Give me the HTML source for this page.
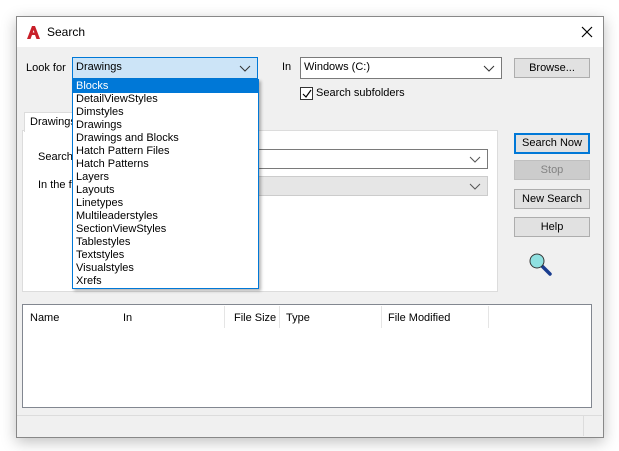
<!DOCTYPE html><html><head><style>
body{margin:0;width:619px;height:451px;background:#fff;font-family:"Liberation Sans",sans-serif;font-size:11px;color:#000;position:relative;overflow:hidden}
.a{position:absolute}
.win{left:16px;top:16px;width:586px;height:420px;border:1px solid #888;background:#f0f0f0;box-shadow:0 4px 14px rgba(0,0,0,.25)}
.title{left:0;top:0;width:586px;height:30px;background:#fff}
.btn{background:#e1e1e1;border:1px solid #adadad;text-align:center;line-height:18px;box-sizing:border-box}
.combo{background:#fff;border:1px solid #7a7a7a;box-sizing:border-box;padding-left:3px;line-height:19px}
.chev{position:absolute;right:6px;top:3px;width:12px;height:12px}
.list div{height:13px;line-height:13px;padding-left:3px;white-space:nowrap}
</style></head><body>
<div class="a win">
 <div class="a title">
  <svg class="a" style="left:9px;top:8px" width="15" height="15" viewBox="0 0 15 15"><path d="M1 14L6 1h3l5 13h-3.5L9 10H6l-1.5 4z M6.8 7.5h1.6L7.6 5z" fill="#c8202a" fill-rule="evenodd"/></svg>
  <div class="a" style="left:30px;top:8px;font-size:12px">Search</div>
  <svg class="a" style="left:564px;top:9px" width="12" height="12"><path d="M1 1L11 11M11 1L1 11" stroke="#000" stroke-width="1.2"/></svg>
 </div>
</div>
<div class="a" style="left:26px;top:62px">Look for</div>
<div class="a combo" style="left:72px;top:57px;width:186px;height:22px;background:#cce4f7;border-color:#0078d7">Drawings<svg class="chev" style="top:4px"><path d="M1 4l5 5 5-5" fill="none" stroke="#333"/></svg></div>
<div class="a" style="left:282px;top:61px">In</div>
<div class="a combo" style="left:300px;top:57px;width:202px;height:22px">Windows (C:)<svg class="chev" style="top:4px"><path d="M1 4l5 5 5-5" fill="none" stroke="#333"/></svg></div>
<div class="a btn" style="left:514px;top:58px;width:76px;height:20px">Browse...</div>
<div class="a" style="left:300px;top:87px;width:13px;height:13px;border:1px solid #333;box-sizing:border-box;background:#fff"><svg class="a" style="left:1px;top:1px" width="10" height="10"><path d="M1 5l3 3 5-7" fill="none" stroke="#000" stroke-width="1.2"/></svg></div>
<div class="a" style="left:316px;top:87px">Search subfolders</div>
<div class="a" style="left:22px;top:130px;width:476px;height:162px;background:#fff;border:1px solid #dcdcdc;box-sizing:border-box"></div>
<div class="a" style="left:24px;top:112px;width:52px;height:19px;background:#fff;border:1px solid #dcdcdc;border-bottom:none;padding-left:5px;line-height:18px">Drawings</div>
<div class="a" style="left:38px;top:151px">Search</div>
<div class="a combo" style="left:240px;top:149px;width:248px;height:20px"><svg class="chev"><path d="M1 4l5 5 5-5" fill="none" stroke="#555"/></svg></div>
<div class="a" style="left:38px;top:179px">In the fi</div>
<div class="a combo" style="left:240px;top:176px;width:248px;height:20px;background:#e6e6e6;border-color:#ccc"><svg class="chev"><path d="M1 4l5 5 5-5" fill="none" stroke="#555"/></svg></div>
<div class="a btn" style="left:514px;top:133px;width:76px;height:21px;border:2px solid #0078d7;line-height:17px">Search Now</div>
<div class="a btn" style="left:514px;top:160px;width:76px;height:20px;background:#ccc;border-color:#bfbfbf;color:#838383">Stop</div>
<div class="a btn" style="left:514px;top:189px;width:76px;height:20px">New Search</div>
<div class="a btn" style="left:514px;top:217px;width:76px;height:20px">Help</div>
<svg class="a" style="left:528px;top:252px" width="28" height="26"><line x1="13" y1="13" x2="22" y2="22" stroke="#1a3d8f" stroke-width="3.5" stroke-linecap="round"/><circle cx="9" cy="9" r="7" fill="#8fe0e0" stroke="#333" stroke-width="1"/></svg>
<div class="a" style="left:22px;top:304px;width:570px;height:104px;background:#fff;border:1px solid #828790;box-sizing:border-box"></div>
<div class="a" style="left:30px;top:312px">Name</div>
<div class="a" style="left:123px;top:312px">In</div>
<div class="a" style="left:224px;top:306px;width:1px;height:22px;background:#e5e5e5"></div>
<div class="a" style="left:234px;top:312px">File Size</div>
<div class="a" style="left:279px;top:306px;width:1px;height:22px;background:#e5e5e5"></div>
<div class="a" style="left:286px;top:312px">Type</div>
<div class="a" style="left:381px;top:306px;width:1px;height:22px;background:#e5e5e5"></div>
<div class="a" style="left:388px;top:312px">File Modified</div>
<div class="a" style="left:488px;top:306px;width:1px;height:22px;background:#e5e5e5"></div>
<div class="a" style="left:17px;top:415px;width:585px;height:1px;background:#dcdcdc"></div>
<div class="a" style="left:583px;top:416px;width:1px;height:20px;background:#dcdcdc"></div>
<div class="a list" style="left:72px;top:79px;width:187px;height:210px;background:#fff;border:1px solid #0078d7;box-sizing:border-box;box-shadow:2px 2px 3px rgba(0,0,0,.3)">
<div style="background:#0078d7;color:#fff">Blocks</div><div>DetailViewStyles</div><div>Dimstyles</div><div>Drawings</div><div>Drawings and Blocks</div><div>Hatch Pattern Files</div><div>Hatch Patterns</div><div>Layers</div><div>Layouts</div><div>Linetypes</div><div>Multileaderstyles</div><div>SectionViewStyles</div><div>Tablestyles</div><div>Textstyles</div><div>Visualstyles</div><div>Xrefs</div>
</div>
</body></html>
